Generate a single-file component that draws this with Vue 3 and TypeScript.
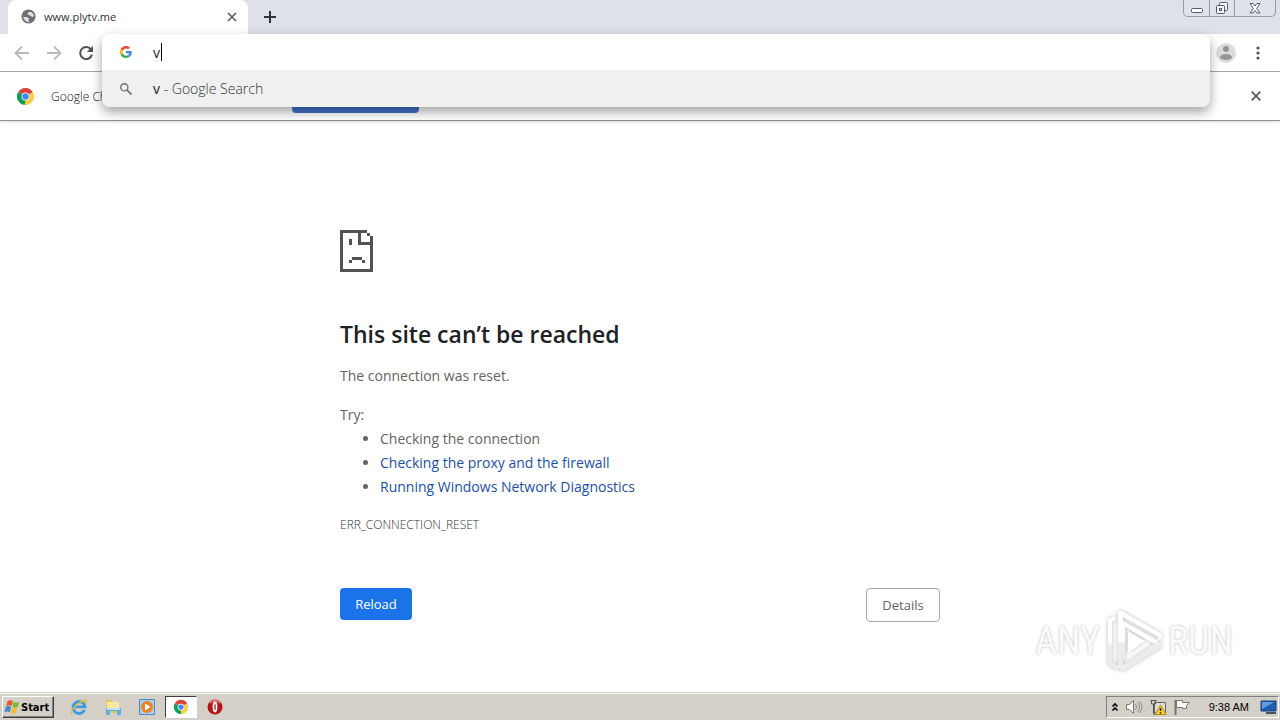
<script setup lang="ts">
import { ref } from 'vue'

const query = ref<string>('v')
const suggestions = ref<string[]>([
  'Checking the proxy and the firewall',
  'Running Windows Network Diagnostics',
])
</script>

<template>
  <div class="desktop">
    <header class="tabstrip">
      <div class="tab">
        <svg class="globe" viewBox="0 0 16 16" aria-hidden="true">
          <circle cx="8" cy="8" r="7.500" fill="#6c6e72" />
          <path d="M2 8.500h4.500l2 2-.5 1.500 1 1.500-1 .5-3.500-1.500zM8.500 3l3 .5 2.500 3.500-1.500 1.500-2.500-1-1.500-1.500-2-.5z" fill="#fff" opacity=".8" />
        </svg>
        <span class="tab-title">www.plytv.me</span>
        <button class="icon-btn tab-close" aria-label="Close tab">
          <svg viewBox="0 0 10 10"><path d="M1 1l8 8M9 1L1 9" stroke="#606266" stroke-width="1.700" /></svg>
        </button>
      </div>
      <button class="icon-btn new-tab" aria-label="New tab">
        <svg viewBox="0 0 12 12"><path d="M6 0v12M0 6h12" stroke="#303236" stroke-width="2" /></svg>
      </button>
      <div class="window-controls">
        <button aria-label="Minimize">
          <svg width="14" height="14" viewBox="0 0 14 14"><rect x="1.500" y="7.500" width="11" height="4" rx="1" fill="#fff" stroke="#555b66" /></svg>
        </button>
        <button aria-label="Restore">
          <svg width="14" height="14" viewBox="0 0 14 14" fill="#f4f5f7" stroke="#555b66"><rect x="4.500" y="1.500" width="8" height="8" rx="1" /><rect x="1.500" y="4.500" width="8" height="8" rx="1" /><rect x="4.500" y="7.500" width="2" height="2" /></svg>
        </button>
        <button class="wide" aria-label="Close">
          <svg width="14" height="14" viewBox="0 0 14 14"><path d="M2 2.500h3l2 2.500 2-2.500h3L8.700 7.500l3.300 4.500H9l-2-2.500L5 12H2l3.300-4.500z" fill="#fff" stroke="#555b66" /></svg>
        </button>
      </div>
    </header>

    <div class="toolbar">
      <button class="icon-btn nav" aria-label="Back">
        <svg viewBox="0 0 16 16"><path d="M15 8H2M8 1.500L1.500 8 8 14.500" fill="none" stroke="#b8babd" stroke-width="1.800" /></svg>
      </button>
      <button class="icon-btn nav" aria-label="Forward">
        <svg viewBox="0 0 16 16"><path d="M1 8h13M8 1.500L14.500 8 8 14.500" fill="none" stroke="#b8babd" stroke-width="1.800" /></svg>
      </button>
      <button class="icon-btn nav" aria-label="Reload page">
        <svg viewBox="0 0 16 16"><path d="M13 4.500A6 6 0 1 0 14 9.500" fill="none" stroke="#505256" stroke-width="2" /><path d="M15 .8V7H8.800z" fill="#505256" /></svg>
      </button>
      <div class="toolbar-end">
        <button class="icon-btn avatar" aria-label="Profile">
          <svg viewBox="0 0 20 20"><circle cx="10" cy="10" r="10" fill="#dcdcdc" /><circle cx="10" cy="6" r="3" fill="#929497" /><ellipse cx="10" cy="14" rx="6" ry="3" fill="#929497" /></svg>
        </button>
        <button class="icon-btn menu" aria-label="Menu">
          <svg viewBox="0 0 4 14"><g fill="#505256"><circle cx="2" cy="2" r="1.600" /><circle cx="2" cy="7" r="1.600" /><circle cx="2" cy="12" r="1.600" /></g></svg>
        </button>
      </div>

      <div class="omnibox">
        <label class="omni-row">
          <svg class="omni-icon" viewBox="0 0 48 48" aria-hidden="true">
            <path fill="#ea4335" d="M24 9.500c3.500 0 6.700 1.200 9.200 3.600l6.900-6.900C35.900 2.400 30.500 0 24 0 14.600 0 6.500 5.400 2.600 13.200l8 6.200C12.400 13.700 17.700 9.500 24 9.500z" />
            <path fill="#4285f4" d="M47 24.500c0-1.600-.2-3.100-.4-4.500H24v9h12.900c-.6 3-2.200 5.500-4.700 7.200l7.700 6C44.400 38 47 31.800 47 24.500z" />
            <path fill="#fbbc05" d="M10.500 28.600a14.500 14.500 0 0 1 0-9.200l-8-6.200a24 24 0 0 0 0 21.600z" />
            <path fill="#34a853" d="M24 48c6.500 0 11.900-2.100 15.900-5.800l-7.700-6c-2.200 1.500-4.900 2.300-8.200 2.300-6.300 0-11.600-4.200-13.500-9.900l-8 6.200C6.500 42.600 14.600 48 24 48z" />
          </svg>
          <span class="omni-entry">
            <input v-model="query" class="omni-input" aria-label="Address and search bar" spellcheck="false" />
            <i class="caret"></i>
          </span>
        </label>
        <button class="omni-row omni-match">
          <svg class="omni-icon" viewBox="0 0 12 12" aria-hidden="true"><circle cx="4.300" cy="4.300" r="3.600" fill="none" stroke="#727478" stroke-width="1.400" /><path d="M6.800 6.800l4.700 4.700" stroke="#727478" stroke-width="1.800" /></svg>
          <span><b>{{ query }}</b> - Google Search</span>
        </button>
      </div>
    </div>

    <div class="infobar">
      <svg class="chrome-logo" viewBox="0 0 48 48" aria-hidden="true">
        <path fill="#db4437" d="M24 24L3.200 12A24 24 0 0 1 44.800 12z" />
        <path fill="#ffcd40" d="M24 24l20.800-12A24 24 0 0 1 24 48z" />
        <path fill="#0f9d58" d="M24 24v24A24 24 0 0 1 3.200 12z" />
        <path fill="#db4437" d="M24 13h20.800v-1L24 11z" />
        <path fill="#ffcd40" d="M33.500 29.500L24 48l-3-2 8-14z" />
        <circle cx="24" cy="24" r="11" fill="#fff" /><circle cx="24" cy="24" r="9" fill="#4285f4" />
      </svg>
      <span class="info-text">Google Chrome</span>
      <button class="info-action" aria-label="Set as default"></button>
      <button class="icon-btn info-close" aria-label="Dismiss">
        <svg viewBox="0 0 10 10"><path d="M.7.700l8.600 8.600M9.300.700L.7 9.300" stroke="#606266" stroke-width="1.900" /></svg>
      </button>
    </div>

    <main class="page">
      <div class="error">
        <svg class="sad-page" viewBox="0 0 33 42" shape-rendering="crispEdges" aria-hidden="true">
          <path fill="#535353" fill-rule="evenodd" d="M0 0h27v3h-6v9h9V6h3v36H0zM3 3v36h27V15H18V3zM27 3h3v3h-3zM9 9h3v6H9zM12 27h10v3H12zM9 30h3v3H9zM22 30h3v3h-3z" />
        </svg>
        <h1>This site can’t be reached</h1>
        <p class="reason">The connection was reset.</p>
        <p class="try">Try:</p>
        <ul>
          <li>Checking the connection</li>
          <li v-for="item in suggestions" :key="item"><a href="#">{{ item }}</a></li>
        </ul>
        <p class="code">ERR_CONNECTION_RESET</p>
        <div class="actions">
          <button class="reload">Reload</button>
          <button class="details">Details</button>
        </div>
      </div>
      <div class="watermark">
        <span>ANY</span>
        <svg viewBox="0 0 58 64" aria-hidden="true">
          <defs>
            <linearGradient id="fade" x1="0" y1="0" x2="0" y2="1"><stop offset=".5" stop-color="#fff" /><stop offset=".55" stop-color="#ececec" /></linearGradient>
          </defs>
          <path d="M3 10l7-3v4l-3 2v40l6 4v4L3 56z" fill="url(#fade)" />
          <path fill-rule="evenodd" d="M13 2h4l40 23v4l-5 3 5 3v3L18 62l-5-3zM18 8v48l31-21-29-17v31l-2 2V12l34 19 2-3z" fill="url(#fade)" />
          <path d="M23 22l17 10-17 12z" fill="#fff" />
        </svg>
        <span>RUN</span>
      </div>
    </main>

    <footer class="taskbar">
      <button class="start">
        <svg viewBox="0 0 18 16" aria-hidden="true"><path fill="#e8542a" d="M4 1.500q3-2 6 0L8.500 7q-3-2-6 0z" /><path fill="#7dba38" d="M10.500 2q3 2 6.500 0L15.500 8q-3 1.500-6 0z" /><path fill="#3f87d6" d="M2 8q3-2 6 0L6.500 14q-3-2-6 0z" /><path fill="#f6bb2d" d="M9 8.500q3 2 6 0l-1.500 6q-3 2-6 0z" /></svg>
        <span>Start</span>
      </button>
      <nav class="apps">
        <button aria-label="Internet Explorer">
          <svg viewBox="0 0 18 18"><path d="M14.500 12A6 6 0 1 1 15 8.800H5" fill="none" stroke="#3b9be0" stroke-width="2.800" /><path d="M2 16C-1 13 9 3 16 2c2 1 0 3-1 4" fill="none" stroke="#e6b93a" stroke-width="1.300" /></svg>
        </button>
        <button aria-label="Windows Explorer">
          <svg viewBox="0 0 18 18"><path fill="#e7c45d" d="M2 2h5l1 2h7v11H2z" /><path fill="#fbeaa0" d="M3 4h12v7H3z" /><path fill="#5faee0" d="M2 10h15v7h-4v-4H6v4H2z" /><path fill="#bfe2f5" d="M3 10h13v2H3z" /></svg>
        </button>
        <button aria-label="Media Player">
          <svg viewBox="0 0 18 18"><path fill="#a9cfef" stroke="#4a8ac4" d="M1.500 1.500h15v15h-15z" /><circle cx="9" cy="9" r="6" fill="#ee8420" /><path fill="#fff" d="M7 5.500v7L12.500 9z" /></svg>
        </button>
        <button class="active" aria-label="Google Chrome">
          <svg viewBox="0 0 48 48">
            <path fill="#db4437" d="M24 24L7.500 14.500a19 19 0 0 1 33 0z" /><path fill="#ffcd40" d="M24 24l16.500-9.500A19 19 0 0 1 24 43z" /><path fill="#0f9d58" d="M24 24v19A19 19 0 0 1 7.500 14.500z" /><circle cx="24" cy="24" r="9" fill="#fff" /><circle cx="24" cy="24" r="7" fill="#4285f4" />
          </svg>
        </button>
        <button aria-label="Opera">
          <svg viewBox="0 0 18 18"><circle cx="9" cy="9" r="7.500" fill="#b51318" /><path d="M4 5q5-5 10 0" stroke="#e88" stroke-width="1.500" fill="none" /><ellipse cx="9" cy="9" rx="1.500" ry="4.500" fill="#8c0b10" stroke="#fff" stroke-width="1.800" /></svg>
        </button>
      </nav>
      <div class="tray">
        <svg class="chev" viewBox="0 0 8 10" aria-label="Show hidden icons"><path d="M1.500 4.500L4 2l2.500 2.500M1.500 8.500L4 6l2.500 2.500" fill="none" stroke="#000" stroke-width="1.600" /></svg>
        <svg viewBox="0 0 18 18" aria-label="Volume"><path d="M1.500 6.500h3l4-4v13l-4-4h-3z" fill="#f7f7f5" stroke="#777" /><path d="M10.500 6q2 3 0 6M12.500 4q4 5 0 10M14.500 3q5 6 0 12" fill="none" stroke="#8b8b87" /></svg>
        <svg viewBox="0 0 18 18" aria-label="Network"><path d="M5.500 4.500h11v10h-11z" fill="#dcdcd8" stroke="#666" /><path d="M2.500 2v4h4V2M4.500 6v10h5M1.500 2.500h6" fill="none" stroke="#555" /><path d="M11.500 7l5.500 9.500H6z" fill="#f9d52c" stroke="#b08b10" /><path d="M11.500 10v3M11.500 14v1.500" stroke="#222" stroke-width="1.500" /></svg>
        <svg viewBox="0 0 18 18" aria-label="Action Center"><path d="M2.500 2v15" stroke="#777" stroke-width="2" /><path d="M3.500 2.500h6v2h7l-3 3v3h-4v-1h-6z" fill="#fafaf8" stroke="#777" /></svg>
        <time>9:38 AM</time>
        <svg class="monitor" viewBox="0 0 18 18" aria-label="Show desktop"><path d="M2 3h15v10H2z" fill="#1f5eae" stroke="#173f78" /><path d="M3 4h12L3 11z" fill="#5f9ee0" /><path d="M7 15h10" stroke="#456" stroke-width="2" /></svg>
      </div>
    </footer>
  </div>
</template>

<style>
body { margin: 0; background: #fff; }
</style>

<style scoped>
* { box-sizing: border-box; }
button { font: inherit; padding: 0; border: 0; background: none; color: inherit; }
svg { display: block; flex: none; }
.desktop { display: flex; flex-direction: column; min-height: 100vh; background: #fff; font-family: "Open Sans", "Noto Sans", sans-serif; }

.tabstrip { display: flex; height: 34px; padding-left: 8px; background: #dee1e8; }
.tab { display: flex; align-items: center; width: 240px; padding: 0 11px 1px 13px; background: #fff; border-radius: 8px 8px 0 0; font-size: 11px; color: #303236; }
.globe { width: 15px; height: 15px; margin-right: 8px; }
.tab-title { flex: 1; }
.icon-btn { display: grid; place-items: center; }
.tab-close svg { width: 10px; height: 10px; }
.new-tab { width: 44px; }
.new-tab svg { width: 12px; height: 12px; }
.window-controls { display: flex; height: 17px; margin: 0 4px 0 auto; border: 1px solid #969ca8; border-top: 0; border-radius: 0 0 5px 5px; background: #dfe2e8; }
.window-controls button { display: grid; place-items: center; width: 25px; }
.window-controls button + button { border-left: 1px solid #969ca8; }
.window-controls .wide { width: 41px; }

.toolbar { position: relative; z-index: 2; display: flex; align-items: center; height: 38px; padding: 0 14px; gap: 16px; border-bottom: 1px solid #a9a9a9; background: #fff; }
.nav svg { width: 16px; height: 16px; }
.toolbar-end { display: flex; align-items: center; margin-left: auto; gap: 14px; }
.avatar svg { width: 20px; height: 20px; }
.menu { width: 16px; }
.menu svg { width: 4px; height: 14px; }

.omnibox { position: absolute; top: 0; left: 102px; right: 70px; border-radius: 8px; background: #fff; box-shadow: 0 5px 12px rgba(0, 0, 0, .36); }
.omni-row { display: flex; align-items: center; width: 100%; height: 36px; padding-left: 18px; font-size: 14px; font-weight: 300; text-align: left; color: #333; }
.omni-icon { width: 12px; height: 12px; margin-right: 21px; }
.omni-row b { font-weight: 400; color: #222; }
.omni-entry { position: relative; display: flex; flex: 1; align-items: center; }
.omni-input { flex: 1; padding: 0; border: 0; outline: 0; background: none; font: inherit; font-weight: 400; color: #222; }
.caret { position: absolute; left: 8px; width: 1px; height: 18px; background: #000; }
.omni-match { height: 37px; border-radius: 0 0 8px 8px; background: #f0f0f0; }

.infobar { position: relative; z-index: 1; display: flex; align-items: center; height: 49px; padding: 0 19px 0 17px; border-bottom: 1px solid #8f8f8f; background: #fff; box-shadow: 0 1px 3px rgba(0, 0, 0, .15); font-size: 12px; font-weight: 300; color: #111; }
.chrome-logo { width: 17px; height: 17px; margin-right: 17px; }
.info-text { width: 241px; }
.info-action { width: 127px; height: 34px; border-radius: 4px; background: #4272cc; }
.info-close { margin-left: auto; }
.info-close svg { width: 10px; height: 10px; }

.page { position: relative; flex: 1; padding-top: 109px; }
.error { width: 600px; max-width: 90%; margin: 0 auto; font-size: 14px; line-height: 24px; color: #646464; }
.sad-page { width: 33px; height: 42px; }
h1 { margin: 47px 0 15px; font-size: 23px; line-height: 30px; font-weight: 600; color: #202124; }
p { margin: 0; }
.try { margin-top: 15px; }
ul { margin: 0; padding-left: 40px; }
a { color: #1b50a8; text-decoration: none; }
.code { margin-top: 14px; font-size: 12px; font-weight: 300; color: #333; }
.actions { display: flex; justify-content: space-between; margin-top: 51px; font-size: 13px; line-height: 20px; }
.reload { width: 72px; height: 32px; border-radius: 4px; background: #1a73e8; color: #fff; }
.details { width: 74px; height: 34px; border: 1px solid #aaa; border-radius: 4px; background: #fff; color: #5f6368; }
.watermark { position: absolute; right: 47px; bottom: 19px; display: flex; align-items: center; gap: 5px; font-family: "Liberation Sans Narrow", "Roboto Condensed", Roboto, sans-serif; font-size: 38px; line-height: 64px; color: #fafafa; text-shadow: 0 0 3px #bbb; }
.watermark svg { width: 58px; height: 64px; filter: drop-shadow(0 0 2px #bbb); }

.taskbar { display: flex; align-items: center; height: 28px; padding: 1px 1px 0 2px; border-top: 1px solid #d4d0c8; background: #d4d0c8; box-shadow: inset 0 1px #fff; }
.start { display: flex; align-items: center; gap: 1px; width: 52px; height: 22px; padding-left: 1px; border: 1px solid; border-color: #fff #404040 #404040 #fff; box-shadow: inset -1px -1px #808080; font: 700 11px "DejaVu Sans Condensed", "DejaVu Sans", sans-serif; color: #000; }
.start svg { width: 16px; height: 16px; }
.apps { display: flex; margin-left: 9px; gap: 2px; }
.apps button { display: grid; place-items: center; width: 32px; height: 22px; }
.apps svg { width: 18px; height: 18px; }
.apps .active { border: 1px solid; border-color: #404040 #fff #fff #404040; background: #fff; }
.tray { display: flex; align-items: center; height: 22px; margin-left: auto; padding: 0 1px 0 4px; gap: 6px; border: 1px solid; border-color: #808080 #fff #fff #808080; font: 11px "Liberation Sans", sans-serif; color: #000; }
.tray svg { width: 18px; height: 18px; }
.tray .chev { width: 8px; height: 10px; }
.tray time { margin: 0 4px 0 12px; white-space: nowrap; }
</style>
